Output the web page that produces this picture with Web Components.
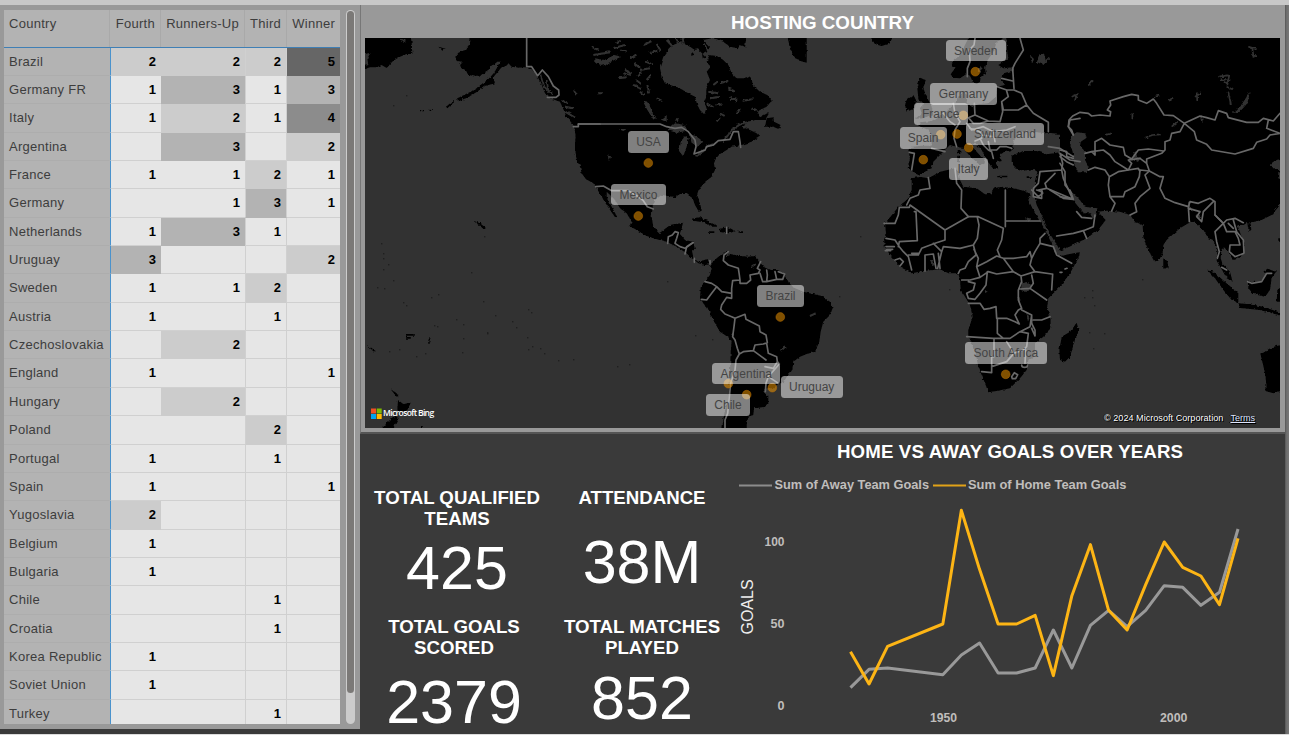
<!DOCTYPE html>
<html lang="en">
<head>
<meta charset="utf-8">
<title>World Cup dashboard</title>
<style>
html,body{margin:0;height:100%}
body{width:1289px;height:735px;overflow:hidden;background:#3a3a3a;font-family:"Liberation Sans",Arial,sans-serif}
</style>
</head>
<body>
<cup-dashboard>
  <country-matrix slot="side"></country-matrix>
  <hosting-map slot="map">
    <map-pin x="975.3" y="71.7" left="945.7" top="39.5" w="60">Sweden</map-pin>
    <map-pin x="963.3" y="115.3" left="930.3" top="83" w="66.5">Germany</map-pin>
    <map-pin x="940.7" y="134.7" left="913.7" top="103" w="54">France</map-pin>
    <map-pin x="923.3" y="159.7" left="899.7" top="127.3" w="47">Spain</map-pin>
    <map-pin x="957" y="134" left="965.7" top="123.3" w="78.6">Switzerland</map-pin>
    <map-pin x="968.7" y="147.7" left="949.3" top="158" w="38.4">Italy</map-pin>
    <map-pin x="648.3" y="163" left="628" top="131" w="41">USA</map-pin>
    <map-pin x="638.3" y="216" left="611" top="183.7" w="55">Mexico</map-pin>
    <map-pin x="780.3" y="317" left="757" top="285" w="47">Brazil</map-pin>
    <map-pin x="746.7" y="394.7" left="712.3" top="362.7" w="68">Argentina</map-pin>
    <map-pin x="772.3" y="387.7" left="780.7" top="376.3" w="62">Uruguay</map-pin>
    <map-pin x="728.3" y="383.7" left="706" top="394" w="44">Chile</map-pin>
    <map-pin x="1005.7" y="374.3" left="964.7" top="342.3" w="82.3">South Africa</map-pin>
  </hosting-map>
  <kpi-card slot="kpis" value="425" style="--gap:7px;--w:172px">TOTAL QUALIFIED TEAMS</kpi-card>
  <kpi-card slot="kpis" value="38M" style="--gap:23px;--w:172px">ATTENDANCE</kpi-card>
  <kpi-card slot="kpis" value="2379" style="--gap:12px;--w:150px;--dx:-3px">TOTAL GOALS SCORED</kpi-card>
  <kpi-card slot="kpis" value="852" style="--gap:8px;--w:172px">TOTAL MATCHES PLAYED</kpi-card>
  <goals-chart slot="chart"></goals-chart>
</cup-dashboard>

<template id="t-dashboard">
<style>
:host{display:grid;width:1289px;height:735px;box-sizing:border-box;grid-template-rows:5px 1fr 1px;background:#3a3a3a}
.top{background:#c8c8c8}.bottom{background:#dcdcdc}
.main{display:grid;grid-template-columns:360px 925px 4px;min-height:0}
.side{height:724px;background:#999}
.content{display:grid;grid-template-rows:429px 1fr;min-height:0}
.low{display:grid;grid-template-columns:370px 1fr;min-height:0}
.kpis{display:grid;grid-template-columns:186px 184px;grid-template-rows:129px 1fr;padding-top:52.6px;padding-left:4px;box-sizing:border-box;min-height:0}
.edge{background:linear-gradient(90deg,#555,#6e6e6e 40%,#777)}
</style>
<div class="top"></div>
<div class="main">
  <div class="side"><slot name="side"></slot></div>
  <div class="content">
    <slot name="map"></slot>
    <div class="low"><div class="kpis"><slot name="kpis"></slot></div><slot name="chart"></slot></div>
  </div>
  <div class="edge"></div>
</div>
<div class="bottom"></div>
</template>

<template id="t-matrix">
<style>
:host{display:flex;gap:6px;padding:5px 4px 0 4px;height:724px;box-sizing:border-box;color:#3d3d3d;font-size:13px;letter-spacing:.27px}
.grid{width:336px;height:714px;overflow:hidden;display:flex;flex-direction:column;background:#b3b3b3}
.row,.head{display:grid;grid-template-columns:106px 51px 84px 42px 53px;flex:none}
.head{height:37.7px;box-sizing:border-box;border-bottom:1px solid #3f7fb5}
.head span{padding:7px 5px 0 0;text-align:right;box-sizing:border-box;white-space:nowrap;border-right:1px solid #a9a9a9;line-height:14px}
.head span:first-child,.row span:first-child{text-align:left;padding-left:5px;padding-right:0}
.head span:last-child{border-right:0;padding-right:5px}
.row{height:28.35px}
.row span{box-sizing:border-box;line-height:27px;white-space:nowrap;border-bottom:1px solid #adadad}
.row span:first-child{border-right:1px solid transparent}
.row b{box-sizing:border-box;text-align:right;padding-right:5px;line-height:27px;color:#000;background:#e6e6e6;border-bottom:1px solid #d0d0d0;letter-spacing:0}
.row b:nth-child(2){border-left:1px solid #4a92cc}
.row b:nth-child(4){border-left:1px solid #d0d0d0;border-right:1px solid #d0d0d0;padding-right:5px}
.row .v2{background:#ccc;border-color:#ccc}.row .v3{background:#b3b3b3;border-color:#b3b3b3}
.row .v4{background:#8c8c8c;border-color:#8c8c8c}.row .v5{background:#666;border-color:#666}
.row b.v2:nth-child(2),.row b.v3:nth-child(2){border-left-color:#4a92cc}
.track{width:9px;height:714px;border-radius:5px;background:#ccc;padding:1px 1px 0;box-sizing:border-box}
.thumb{height:682px;border-radius:4px;background:#7b7977}
</style>
<div class="grid"><div class="head"><span>Country</span><span>Fourth</span><span>Runners-Up</span><span>Third</span><span>Winner</span></div></div>
<div class="track"><div class="thumb"></div></div>
</template>

<template id="t-map">
<style>
:host{display:flex;flex-direction:column;box-sizing:border-box;height:429px;width:925px;background:#999;border-left:1px solid #777;border-bottom:2px solid #555;padding:0 4px 4px 4px}
h2{margin:0 0 0 -1px;height:33px;line-height:35px;text-align:center;color:#fff;font-size:18.8px;font-weight:bold}
.canvas{position:relative;width:915px;height:390px;overflow:hidden;background:#333}
svg.world{display:block;width:915px;height:390px}
.brand,.legal{position:absolute;display:flex;align-items:center;font-size:9px;color:#fff;white-space:nowrap}
.brand{left:5.5px;top:369px;gap:1.5px;font:600 8.6px "Open Sans",sans-serif;letter-spacing:-.68px}
.legal{left:739px;top:374.5px;gap:7px;font-size:9px;text-shadow:1px 1px 0 #000,-1px 0 0 #000;letter-spacing:.06px}
u{color:#dfe6ff}
</style>
<h2>HOSTING COUNTRY</h2>
<div class="canvas">
<svg class="world" viewBox="365 38 915 390">
<defs><filter id="rough" x="0" y="0" width="100%" height="100%"><feTurbulence type="fractalNoise" baseFrequency=".28" numOctaves="2" seed="4"/><feDisplacementMap in="SourceGraphic" scale="3.2" xChannelSelector="R" yChannelSelector="G"/></filter></defs>
<g filter="url(#rough)">
<rect x="350" y="20" width="950" height="430" fill="#333"/>
<g transform="translate(360 30) scale(.33333)">
<path d="M0 0H150L155 40 157 72 140 72 120 80 100 92 80 114 65 105 50 112 30 112 0 122ZM330 0L327 45 315 60 295 68 285 82 290 92 305 95 300 108 318 122 325 135 345 140 358 140 372 128 388 118 400 105 412 95 424 95 412 112 402 128 392 140 380 152 368 160 350 175 330 186 310 196 288 207 296 214 325 202 350 186 375 168 405 160 400 142 425 112 440 108 445 100 455 110 475 113 495 112 515 118 530 135 545 165 555 190 570 205 600 215 618 240 612 255 625 265 640 280 648 320 645 350 650 390 660 410 665 430 678 448 700 460 715 480 740 500V0ZM258 230L280 212 282 217 262 235ZM180 240h12v4h-12zM205 236l18 2-14 4zM235 50l22 6-10 6zM340 572l20 8 18 14-6 4z"/>
<path d="M15 72L32 68 22 85 25 105 10 108ZM120 24l18 8-8 6zM625 215l10 12-30-6zM632 235l-14 3 8 6z" fill="#333"/>
<path d="M540 130l12 40 26 22M560 150l6 38M600 215l36 8M605 235l32 4M612 250l30 6M625 262l22 14M640 170l14 30M700 55l20 12M705 90l15 14" stroke="#333" stroke-width="5" fill="none"/>
</g>
<g transform="translate(560 30) scale(.33333)">
<path d="M0 0H560L555 60 560 80 545 100 555 130 575 145 578 165 600 185 622 195 635 212 620 230 590 245 600 262 630 245 615 270 585 270 560 280 545 290 570 300 590 310 600 320 575 335 545 345 515 350 500 360 480 372 468 385 462 400 465 420 455 440 430 460 415 485 410 500 420 520 425 540 415 542 405 525 398 505 380 492 360 492 345 502 325 498 305 495 285 510 278 530 275 560 280 590 295 608 320 608 340 600 345 585 368 578 365 595 358 610 375 630 400 635 405 660 380 664 350 650 320 635 290 628 260 618 230 600 208 588 215 575 200 550 180 535 165 510 145 490 130 476 140 500 155 530 172 562 164 560 140 525 125 500 108 472 95 450 78 435 65 410 50 385 45 350 48 300 40 285 20 260 0 215ZM680 0H740V98L710 90 690 60ZM395 566L420 562 445 573 475 590 455 590 430 577 400 572ZM478 596L505 592 527 604 505 610 480 606ZM536 604h14v5h-14zM445 604h18v5h-18zM620 265L640 262 642 275 662 285 655 297 640 290 615 290Z"/>
<g fill="#333"><path d="M360 36L340 45 325 60 310 80 300 110 305 140 315 160 340 168 365 178 385 190 405 200 412 225 420 240 432 252 440 235 432 215 438 200 440 170 450 150 440 125 452 110 440 95 448 75 470 78 490 90 505 105 515 130 530 145 552 145 575 135 565 60 540 40 535 55 510 50 490 35 460 24 430 30 450 50 440 68 425 55 405 60 390 50Z"/>
<path d="M322 300L345 280 375 285 382 302 350 308ZM375 318L362 335 358 365 370 378 380 350 386 325ZM386 312L408 318 430 335 412 350 395 338ZM404 378L430 358 436 362 412 380ZM430 350l28-10 4 8zM248 212L265 215 282 260 292 265 280 268 262 240ZM103 85l30 5 30-15 20 5-40 20-20 5-20-8zM145 370l8 10-4 10zM175 297l25 0-10 6zM305 270l15-12 0 18zM345 265l12 0-4 12z"/></g>
<path d="M95 50l20 10M100 75l50-8M160 55l35-10M118 95l30 8M180 62l20 2M195 120l20 10M190 130l22 5M175 145l25-3M222 100l18 14M228 150l16 12M222 165l22 12M235 140l10-15M240 120l30-5M262 165l5 25M260 150l14-16M210 85l20-12M250 45l24-12M320 30l18 20M345 28l20 10M375 55l-8-30M170 40l12-8M270 70l22-8M290 42l12 20M255 95l24 8M240 185l12 10M290 205l16 8M460 165l15-12M480 160l25-8M445 185l30 5M450 205l28-4M440 220l20 12M505 175l20 10M510 210l22-5M512 200l16 15M548 212l30-4M470 225l18-2M530 250l10-15M480 250l14 8M480 262l-10 12M575 235l15 5M490 335l25-35 30-20 35-5M115 190h14M42 180l8 16M5 210l20 12M15 230l25 5M15 245l30 18M510 110l25 10M470 40l40 30M430 40l20 30" stroke="#333" stroke-width="6" fill="none"/>
<path d="M400 24l25 6 15 30-12 12-20-20zM505 24l50 4-8 20-35-12zM395 65l10 10-12 2zM425 70l12 12-8 6z"/>
</g>
<g transform="translate(660 220) scale(.33333)">
<path d="M0 38L30 15 45 12 68 10 65 25 60 40 50 60 75 75 98 68 95 85 100 115 115 125 140 118 152 132 135 135 115 130 95 115 80 100 65 90 40 70 15 62 0 58ZM150 135L170 115 190 98 205 95 195 112 215 103 240 108 265 110 285 108 300 125 310 140 330 150 355 150 375 165 385 185 395 200 430 215 460 222 485 228 510 245 518 265 510 285 490 305 482 335 478 365 465 395 440 402 420 410 400 425 397 450 380 470 370 490 355 490 345 505 320 505 310 515 325 530 325 550 310 562 282 565 280 585 265 590 260 615 262 640H185L190 600 195 570 205 540 208 500 210 450 212 400 215 360 205 352 180 335 165 310 150 280 130 250 120 235 122 205 130 190 150 165 155 145Z"/>
<path d="M450 288L467 280M362 392L375 382M275 140l12-8M215 340l6 6" stroke="#333" stroke-width="6"/>
</g>
<g transform="translate(860 35) scale(.33333)">
<path d="M28 0H100L90 25 65 33 45 28ZM280 78L275 90 285 100 272 118 280 128 300 130 318 118 330 122 338 140 350 148 360 140 362 125 378 118 375 100 380 80 400 50 420 20 435 0H330L300 60ZM700 0H438L442 50 445 70 430 80 415 90 430 100 460 97 462 106 432 115 422 130 435 150 410 155 408 185 385 205 355 208 335 215 320 205 322 180 308 170 295 190 275 215 255 235 235 245 215 258 180 262 175 272 205 285 215 300 215 332 185 332 155 335 145 345 150 370 143 400 160 412 175 420 195 410 215 400 220 380 240 360 255 345 270 330 290 335 308 338 318 350 335 368 362 392 376 384 372 375 350 350 335 332 345 322 365 345 382 378 400 402 415 400 406 382 426 378 420 360 440 345 450 350 462 340 460 320 480 290 520 290 600 300 700 330ZM180 128L197 135 190 160 200 185 215 215 220 240 185 250 165 252 185 235 180 220 190 205 175 190 172 160ZM140 195L160 180 168 195 165 220 140 230 135 210ZM455 362L490 348 530 348 560 358 600 352 700 340V560L640 520 560 500 520 485 522 450 532 410 520 402 490 407 465 400 455 380ZM328 392h24v8h-18zM293 345h8v12h-8zM292 362h8v20h-8zM412 422h30v5h-30zM500 424h15v5h-15z"/>
<path d="M457 335L470 302 495 288 515 300 512 315 540 315 560 295 575 310 600 325 606 345 560 345 530 338 500 338 475 350ZM530 80l8-22 14-2 5 20-12 12zM510 60l12 12-6 14zM410 20l25-10 0 40-30 36-12-6 8-30zM520 440l6 2-3 30zM636 190l20-12M300 24z" fill="#333"/>
<path d="M548 88l20-20M640 195l20-15M355 110l10-12" stroke="#333" stroke-width="6" fill="none"/>
</g>
<path d="M1060 30H1290V195H1060Z"/>
<g transform="translate(860 190) scale(.33333)">
<path d="M155 -35L180 -40 205 -35 240 -55 285 -65 295 -55 300 -30 310 -10 350 -5 375 13 395 10 400 -5 430 -10 470 -3 500 5 512 15 505 30 525 70 550 110 575 160 588 190 605 197 640 190 660 187 655 205 630 250 600 290 565 325 562 350 572 390 570 420 550 440 525 460 525 495 505 510 500 540 480 565 450 595 410 603 385 607 375 580 355 530 345 480 325 440 325 420 338 380 330 345 318 325 302 300 300 265 290 250 265 250 240 238 190 243 155 250 120 230 95 200 75 175 72 150 78 130 75 100 100 70 115 50 140 30 155 0ZM650 398L656 420 645 450 630 500 615 515 600 510 598 480 605 440 630 425ZM524 20L540 -20 640 -10 645 30 665 55 695 62 705 52 720 72 737 90 715 120 680 145 640 165 600 182 588 160 575 140 560 110 545 75 530 45Z"/>
<path d="M485 280l20-4 8 16-14 14-16-6zM498 365l10 20-4 10zM475 310l6 20-4 16zM510 385l12 24-4 8zM375 300l8 5-8 4zM210 210l10 0 4 16-8 2zM495 82l20 4-10 10z" fill="#333"/>
</g>
<g transform="translate(1080 190) scale(.33333)">
<path d="M-60 -10H620V30L600 45 575 75 545 90 520 95 500 100 490 105 472 105 485 140 494 160 492 190 470 208 458 210 450 192 432 172 424 185 422 205 428 222 450 245 458 275 440 265 425 238 410 212 412 180 400 150 385 145 370 120 345 95 325 100 300 115 260 150 250 165 248 190 235 215 222 213 205 180 190 145 188 105 165 95 150 75 120 65 80 62 50 65 30 52 10 45 -20 40 -50 10ZM382 240L400 245 440 280 475 310 475 337 455 330 430 300 405 265ZM475 340L510 343 550 350 605 370 600 376 540 360 480 354ZM503 275L545 275 560 250 550 245 562 236 588 245 575 265 570 300 555 320 520 312 505 295ZM610 285L592 300 590 335 610 335ZM610 463L575 472 550 488 541 490 548 520 555 550 560 590 556 603 580 610 610 600ZM502 100l10 0 2 20-8 4zM250 205L262 213 266 232 250 236ZM595 145h15v10h-15z"/>
</g>
<g transform="translate(1060 35) scale(.33333)" fill="#333">
<path d="M28 320L38 300 50 292 75 295 80 308 62 320 60 332 75 350 75 375 86 395 80 412 55 412 42 385 38 350ZM35 472L55 490 75 515 95 518 112 520 108 545 98 550 90 535 72 535 55 515 35 490ZM632 390L650 375 680 368V405L645 405ZM655 410L680 425V440L655 430ZM570 170l-8 35-22 25-22 4 22-18z"/>
<path d="M475 125l30-4M482 132l20 4M508 120l-6 30M492 140l10 10M500 155l16 8M505 170l8 40M565 35l25 8M570 60l22 4M577 40l4 28M85 152l14-16M35 185l20-8M45 195l4-10M405 185l18-10M412 195l-2-22M325 198l14-10M217 235v18M255 308l22-8 25-2M135 300l18-4M335 275l18-16M422 240l4 20M280 186l18-4M208 375l35-6M220 362l18 14M225 350l8 30M385 500l10 30M408 540l14 8" stroke="#333" stroke-width="5" fill="none"/>
</g>
<g transform="translate(360 230) scale(.33333)"><path d="M92 478l18 12 8 12-8-2zM114 510L130 522 152 518 142 540 122 550 112 540ZM104 556L116 564 100 594 92 610H52L80 580ZM20 344L30 350 48 364 40 364ZM138 312h26v5h-26zM138 321h14v5h-14zM209 320l3 2-6 20-2-2zM183 588h5v8h-5z"/></g>
</g>
<g id="islets" fill="#1f1f1f"></g>
<g fill="none" stroke="#686868" stroke-width="5" stroke-linejoin="round" stroke-linecap="round">
<path transform="translate(360 30) scale(.33333)" d="M500 24V110L515 110 525 125 533 137 547 120 565 140 580 168 596 180 597 195 588 202 562 202M640 290L655 290 655 282 720 282"/>
<path transform="translate(560 30) scale(.33333)" d="M55 282H300L320 290 345 295 365 292 385 305 405 330 408 350 402 372 435 360 440 350 460 345 475 332 510 328 520 305 535 305 540 335 542 352M107 470L130 468 155 482 205 482 235 500 250 512 262 530 280 537M323 640L325 620 337 615 345 605 355 608 350 625 345 640 360 650 375 655 400 638M500 592V610"/>
<path transform="translate(660 220) scale(.33333)" d="M75 102L80 80 98 68M103 115v12M150 122v10M205 95L192 105 190 122 205 135 235 145 238 165 240 180 218 182 215 205 215 235 200 232 185 255 182 268 195 282 215 290 225 295M240 180L240 190 260 190 272 180 270 165 295 160 300 150 292 145 302 125M300 160L308 185 320 185 322 165 320 150M320 185L350 178 368 178 374 162 355 155M350 178L345 155M135 185L155 190 170 200 155 220 140 240 125 238M170 200L185 215 215 220M225 295L255 283 258 298 298 318 300 335 318 345 322 368 310 372 285 375 280 392 250 395 238 402 232 385 225 360 218 350 222 320 225 295M280 392L318 420 M315 440L340 445 352 425 350 410 325 400 320 370M352 425L358 432 325 470 352 488M325 470L318 490 316 515M238 402L228 420 225 450 212 490 208 530 203 580 195 600 195 624"/>
<path transform="translate(860 35) scale(.33333)" d="M345 10L342 30 328 45 330 80 322 100 322 125M480 10L490 45 465 85 458 100 460 130 462 160M425 130L458 138M412 155L440 165 462 165 485 175 500 210 475 225 430 225 425 200 445 185 440 168M500 210L520 235 565 262 565 290M425 200L428 230 420 260 385 258 345 240 343 205M345 240L325 248 340 265 360 265 385 258M280 205L285 235 300 260 285 285 282 310 290 335M320 265L335 285 370 275 400 290 440 285 465 275M330 280L360 290 365 310 345 318M360 310L370 330 385 345 395 350 400 370M385 320L390 345 410 345 420 335 440 335 455 340M400 290L405 320M365 300L400 305M148 352L163 355 155 405M215 340L255 350M250 235L270 260 285 270M205 428L210 460 180 465 175 480 150 490 140 510M285 400L290 445 305 465 303 520 325 545M540 410L605 405 610 430 637 490M555 445L560 460 637 492M540 410L535 445 520 460 520 485 545 490 545 470 530 465M560 460L535 465M555 445L585 415M600 355L608 385 605 405M660 380L630 375 600 355M565 335L600 340 640 365M660 250L630 255 625 275 640 300"/>
<path transform="translate(860 190) scale(.33333)" d="M72 100H105L115 75 118 52 148 52 150 45 255 120 325 80 355 80 430 115 425 150 412 180 420 200M163 65H168L172 152 118 155M436 0V110M436 93H540M352 82L357 105 352 145 340 165 300 175 250 170 245 185M255 120L255 150 225 160 185 175 175 195M340 165L348 195 325 215 315 235 300 240 295 250M342 178L355 205 350 230 380 215 410 198 430 205 445 225 460 245 410 252 385 245 360 262 350 230M360 262L330 270 305 270M382 245L378 285 360 310 345 328 325 325M325 275L345 280 340 300 320 310 325 325M325 340H360L372 358 390 355 408 350 410 385 440 385 465 395 478 402 465 375 475 360 485 355 475 330 475 300 485 275 483 258 460 245M430 205L460 205 500 200 510 185 515 205 510 225 525 245 483 258M555 130L540 145 540 160 525 185 515 205M540 160L580 170 590 195 635 220M600 247l6 0M615 237l6 -2M575 252L525 245M578 252L575 300M480 297L510 295 560 330M515 255L520 280 510 295M520 390L545 390 570 380M412 385V430L430 445 450 445 480 425 510 410 515 375 485 360M515 375L515 400 525 420 525 438 515 415M320 440L400 445 450 445M402 448V500H395V548L365 545M395 530L440 515 462 490 440 455M480 425L505 430 500 470 490 480 462 490M497 480L495 520M485 525a9 7 0 1 0 18 0M455 560l8-12 10 6-6 12-10 0zM78 145L105 150 118 170 130 185 145 200 155 240M78 170H103M76 182H92M105 210L120 205 130 215 120 228M118 155L115 170M145 195H175M195 195V243M195 195L220 192 228 235M235 190L240 235M245 185L233 235M220 160L245 185M80 178h18M590 138L640 130 670 122 680 145M670 122L700 110 705 75M650 65L665 82 695 85M570 0L610 25 640 28 630 0M515 0L535 20 548 10 545 0M155 190H175"/>
<path transform="translate(1060 35) scale(.33333)" d="M40 300L35 285 25 275 27 255 38 243 60 232 85 235 95 243 120 240 150 243 152 230 142 225 152 210 150 198 190 185 215 178 235 182 235 195 260 205 280 192 290 205 312 240 340 242 373 265 420 243 440 248 465 255 475 227 500 235 505 248 560 262 595 262 610 250 640 258 660 235M625 255L620 280 660 295 630 300 620 312 590 322 580 340 525 357 455 345 440 328 410 315 403 290 373 265 360 290 335 295 330 315 315 320 315 345 305 355 260 372 260 385 268 408M105 360V320L125 310 150 330 190 337 195 360 215 372 235 345 265 342 310 348M75 355L95 350 105 360M95 350L130 345 150 360 165 380 205 405 215 385 205 375 240 370 260 385M205 405L235 400 240 410M85 405L105 397 135 405 148 425 145 450 150 485 165 505 155 528M148 425L175 410 205 405M150 485L190 485 195 470 225 455 238 425 240 405 268 408 255 420 270 460 240 485 225 505 230 530 210 540M268 408L300 425 310 425 300 460 315 490 345 503 385 515 390 500 415 505 450 490 465 500 465 540 485 560M385 515L388 560M385 520L420 530 410 545 425 560 430 530 460 500M0 345L20 350 20 365 40 370M0 365L20 380 40 390M0 385L15 410 15 450 35 475M0 485L30 490"/>
<path transform="translate(1080 190) scale(.33333)" d="M405 75L430 100 440 90 465 85 490 98M430 100L405 125 410 155 418 185 412 205M430 100L440 125 465 125 475 145 480 165 450 165 448 185 465 200M460 90L470 125 490 150 492 190 465 200M425 232L440 240M503 275L515 280 545 275 560 250 575 250M445 100l15 15"/>
</g>
<g id="dots" fill="#ffa000" fill-opacity=".5" stroke="#c87800" stroke-opacity=".5" stroke-width=".8"></g>
</svg>
<slot></slot>
<div class="brand"><svg width="11" height="11" viewBox="0 0 11 11"><path fill="#f05022" d="M0 .5h5v5H0z"/><path fill="#7fba00" d="M5.7.5h5v5h-5z"/><path fill="#00a4ef" d="M0 6h5v5H0z"/><path fill="#ffb900" d="M5.7 6h5v5h-5z"/></svg><span>Microsoft Bing</span></div>
<div class="legal"><span>© 2024 Microsoft Corporation</span><u>Terms</u></div>
</div>
</template>

<template id="t-pin">
<style>
:host{position:absolute;height:21.7px;line-height:22px;text-align:center;border-radius:3.5px;background:rgba(255,255,255,.5);color:#444;font-size:12px;white-space:nowrap}
</style><slot></slot>
</template>

<template id="t-kpi">
<style>
:host{display:flex;flex-direction:column;align-items:center;color:#fff;position:relative;left:var(--dx,0)}
.label{width:var(--w);text-align:center;font-weight:bold;font-size:18.67px;line-height:21.5px}
.value{font-size:61px;line-height:62px;margin-top:var(--gap)}
</style>
<div class="label"><slot></slot></div><div class="value"></div>
</template>

<template id="t-chart">
<style>
:host{display:block;width:555px;height:300px}
svg{display:block;font-family:"Liberation Sans",Arial,sans-serif}
polyline{vector-effect:non-scaling-stroke}
</style>
<svg width="555" height="300" viewBox="730 434 555 300">
<text x="1010" y="457.5" text-anchor="middle" font-size="18.67" font-weight="bold" fill="#fff" textLength="346">HOME VS AWAY GOALS OVER YEARS</text>
<path d="M739 485.5H772" stroke="#8c8c8c" stroke-width="2"/><path d="M933 485.5H966" stroke="#e0a218" stroke-width="2"/>
<g font-size="13" font-weight="bold" fill="#c0bebc">
<text x="774.5" y="489" textLength="154.5" lengthAdjust="spacingAndGlyphs">Sum of Away Team Goals</text>
<text x="968" y="489" textLength="158.5" lengthAdjust="spacingAndGlyphs">Sum of Home Team Goals</text>
<g font-size="12.5">
<text x="764.5" y="546" textLength="20" lengthAdjust="spacingAndGlyphs">100</text>
<text x="770.5" y="628" textLength="14" lengthAdjust="spacingAndGlyphs">50</text>
<text x="777.5" y="710" textLength="7" lengthAdjust="spacingAndGlyphs">0</text>
<text x="930" y="722" textLength="27" lengthAdjust="spacingAndGlyphs">1950</text>
<text x="1160" y="722" textLength="27.5" lengthAdjust="spacingAndGlyphs">2000</text>
</g></g>
<text transform="translate(753 607) rotate(-90)" text-anchor="middle" font-size="16" fill="#eee">GOALS</text>
<g transform="translate(730 430) scale(.3565 .33333)" fill="none" stroke-width="3" stroke-linejoin="round">
<polyline stroke="#999" points="338,773 390,718 442,714 597,734 649,675 700,639 752,729 804,729 856,714 907,600 959,714 1011,586 1062,541 1114,590 1166,541 1218,467 1270,472 1321,526 1373,487 1425,297"/>
<polyline stroke="#fdb515" points="338,665 390,762 442,649 597,582 649,241 700,418 752,582 804,582 856,556 907,737 959,497 1011,344 1062,541 1114,600 1166,464 1218,336 1270,412 1321,438 1373,524 1425,325"/>
</g>
</svg>
</template>

<script>
const stamp = (el, id) => {
  const root = el.attachShadow({mode: 'open'});
  root.append(document.getElementById(id).content.cloneNode(true));
  return root;
};
const SVG = 'http://www.w3.org/2000/svg';

customElements.define('cup-dashboard', class extends HTMLElement {
  constructor() { super(); stamp(this, 't-dashboard'); }
});

// Rows: country, then fourth / runners-up / third / winner counts.
const STANDINGS = `Brazil|2|2|2|5
Germany FR|1|3|1|3
Italy|1|2|1|4
Argentina||3||2
France|1|1|2|1
Germany||1|3|1
Netherlands|1|3|1|
Uruguay|3|||2
Sweden|1|1|2|
Austria|1||1|
Czechoslovakia||2||
England|1|||1
Hungary||2||
Poland|||2|
Portugal|1||1|
Spain|1|||1
Yugoslavia|2|||
Belgium|1|||
Bulgaria|1|||
Chile|||1|
Croatia|||1|
Korea Republic|1|||
Soviet Union|1|||
Turkey|||1|`.split('\n').map(r => r.split('|'));

customElements.define('country-matrix', class extends HTMLElement {
  constructor() {
    super();
    const grid = stamp(this, 't-matrix').querySelector('.grid');
    for (const [name, ...vals] of STANDINGS) {
      const row = document.createElement('div');
      row.className = 'row';
      row.innerHTML = `<span>${name}</span>` + vals.map(v => `<b class="v${v}">${v}</b>`).join('');
      grid.append(row);
    }
  }
});

customElements.define('hosting-map', class extends HTMLElement {
  constructor() {
    super();
    const root = stamp(this, 't-map');
    const dots = root.getElementById('dots');
    for (const pin of this.querySelectorAll('map-pin')) {
      const c = document.createElementNS(SVG, 'circle');
      c.setAttribute('cx', pin.getAttribute('x'));
      c.setAttribute('cy', pin.getAttribute('y'));
      c.setAttribute('r', 4.4);
      dots.append(c);
    }
    // Small Pacific and Indian Ocean islands.
    const isles = [[381,243],[383,253],[383,258],[388,264],[383,269],[393,280],[377,287],[384,288],[403,302],[406,305],[431,297],[438,294],[471,272],[484,236],[483,301],[456,319],[463,324],[434,325],[437,326],[495,315],[487,333],[463,338],[462,352],[487,332],[512,321],[516,327],[528,309],[531,312],[527,337],[528,349],[532,346],[540,348],[544,353],[558,360],[573,359],[617,366],[629,364],[399,349],[389,351],[416,356],[425,353],[667,281],[695,335],[712,339],[860,236],[839,296],[1084,297],[1094,305],[1092,297],[1089,332],[1093,348],[1142,279],[1104,333],[949,289],[406,95],[393,105],[1092,290]];
    root.getElementById('islets').innerHTML = isles.map(([x, y]) => `<rect x="${x}" y="${y}" width="1.4" height="1.4"/>`).join('');
  }
});

customElements.define('map-pin', class extends HTMLElement {
  constructor() { super(); stamp(this, 't-pin'); }
  connectedCallback() {
    this.style.left = this.getAttribute('left') - 365 + 'px';
    this.style.top = this.getAttribute('top') - 38 + 'px';
    this.style.width = this.getAttribute('w') + 'px';
  }
});

customElements.define('kpi-card', class extends HTMLElement {
  constructor() {
    super();
    stamp(this, 't-kpi').querySelector('.value').textContent = this.getAttribute('value');
  }
});

customElements.define('goals-chart', class extends HTMLElement {
  constructor() { super(); stamp(this, 't-chart'); }
});
</script>
</body>
</html>
